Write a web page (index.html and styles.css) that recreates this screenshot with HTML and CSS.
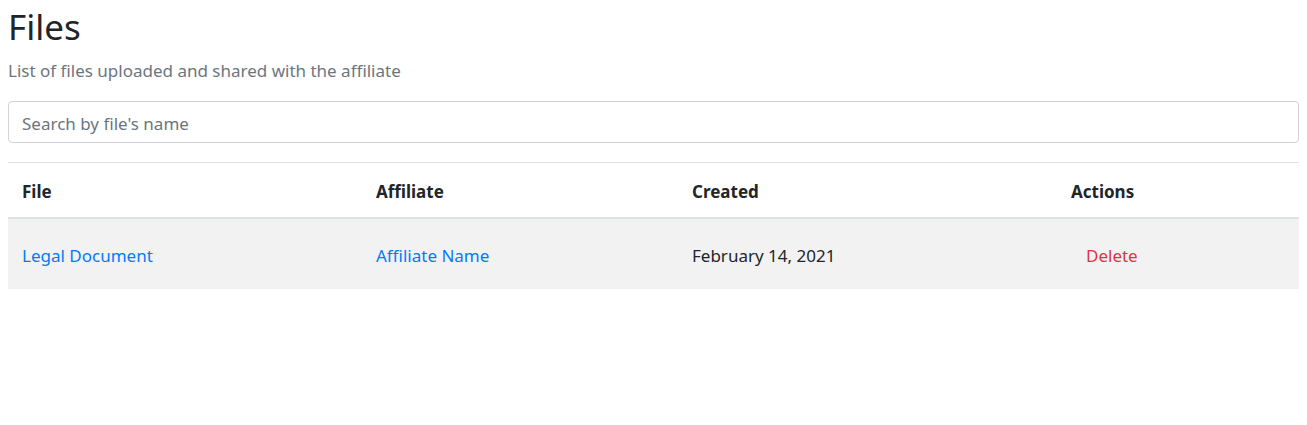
FILE: index.html
```html
<!DOCTYPE html>
<html lang="en">
<head>
<meta charset="utf-8">
<title>Files</title>
<link rel="stylesheet" href="styles.css">
</head>
<body>
<main class="page">
  <h1 class="title">Files</h1>
  <p class="subtitle">List of files uploaded and shared with the affiliate</p>
  <input class="search" type="text" placeholder="Search by file's name">
  <hr class="divider">
  <table class="files">
    <colgroup>
      <col class="c-file"><col class="c-aff"><col class="c-created"><col class="c-actions">
    </colgroup>
    <thead>
      <tr><th>File</th><th>Affiliate</th><th>Created</th><th>Actions</th></tr>
    </thead>
    <tbody>
      <tr>
        <td><a class="link" href="#">Legal Document</a></td>
        <td><a class="link" href="#">Affiliate Name</a></td>
        <td>February 14, 2021</td>
        <td><button class="btn-delete" type="button">Delete</button></td>
      </tr>
    </tbody>
  </table>
</main>
</body>
</html>
```
FILE: styles.css
```css
* { box-sizing: border-box; }
body {
  margin: 8px;
  font-family: "Noto Sans", "Open Sans", sans-serif;
  color: #212529;
  font-size: 17px;
  line-height: 1.5;
  background: #fff;
}
.title {
  margin: 0;
  font-size: 35px;
  font-weight: 400;
  line-height: 38px;
}
.subtitle {
  margin: 12px 0 18px;
  color: #6c757d;
  font-size: 17px;
  line-height: 25px;
}
.search {
  display: block;
  width: 100%;
  height: 42px;
  padding: 7px 13px 5px;
  font-family: inherit;
  font-size: 17px;
  color: #495057;
  border: 1px solid #ced4da;
  border-radius: 4px;
  background: #fff;
}
.search::placeholder { color: #6c757d; }
.divider {
  margin: 19px 0 0;
  border: 0;
  border-top: 1px solid #dee2e6;
}
.files {
  width: 100%;
  border-collapse: collapse;
  table-layout: fixed;
}
.c-file { width: 354px; }
.c-aff { width: 316px; }
.c-created { width: 379px; }
.files th {
  text-align: left;
  font-weight: 700;
  height: 54px;
  padding: 17px 14px 13px;
  border-bottom: 2px solid #dee2e6;
  line-height: 24px;
}
.files td {
  height: 70px;
  padding: 18px 14px 14px;
  background: #f2f2f2;
  vertical-align: middle;
  line-height: 24px;
}
.link {
  color: #007bff;
  text-decoration: none;
}
.btn-delete {
  font-family: inherit;
  font-size: 17px;
  line-height: 24px;
  padding: 6px 14px;
  border: 1px solid transparent;
  border-radius: 4px;
  background: transparent;
  color: #dc3545;
  cursor: pointer;
}
```
